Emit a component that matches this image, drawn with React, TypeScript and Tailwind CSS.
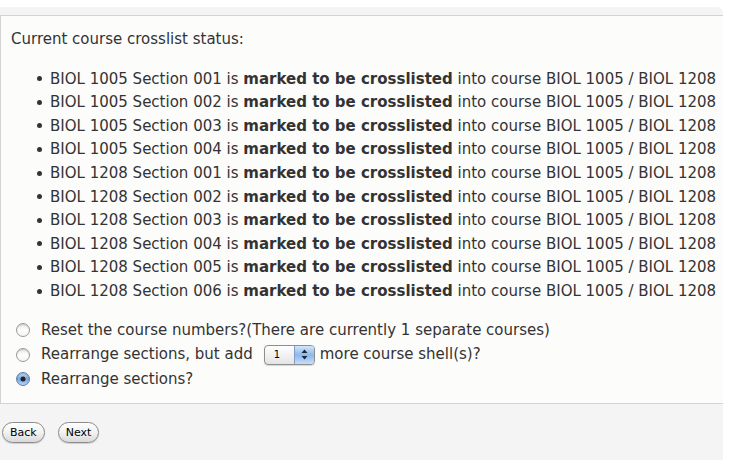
import React from "react";

const SECTIONS = [
  ["1005", "001"],
  ["1005", "002"],
  ["1005", "003"],
  ["1005", "004"],
  ["1208", "001"],
  ["1208", "002"],
  ["1208", "003"],
  ["1208", "004"],
  ["1208", "005"],
  ["1208", "006"],
];

function Radio({ checked = false }: { checked?: boolean }) {
  return checked ? (
    <span className="relative inline-block h-[14px] w-[14px] shrink-0 rounded-full border border-[#5a7fae] bg-gradient-to-b from-[#c9dcf3] via-[#7aa6dc] to-[#b6d3f5] shadow-[inset_0_1px_1px_rgba(0,0,0,0.2)]">
      <span className="absolute left-1/2 top-1/2 h-[5px] w-[5px] -translate-x-1/2 -translate-y-1/2 rounded-full bg-[#1b2433]" />
    </span>
  ) : (
    <span className="inline-block h-[14px] w-[14px] shrink-0 rounded-full border border-[#9a9a9a] bg-gradient-to-b from-[#e6e6e6] via-[#ffffff] to-[#f4f4f4] shadow-[inset_0_1px_1px_rgba(0,0,0,0.15)]" />
  );
}

function Pill({ children }: { children: React.ReactNode }) {
  return (
    <button className="h-[21px] rounded-full border border-[#8b8b8b] bg-gradient-to-b from-[#ffffff] via-[#f2f2f2] to-[#d9d9d9] px-[7px] text-[11px] leading-none text-black shadow-[0_1px_1px_rgba(0,0,0,0.15)]">
      {children}
    </button>
  );
}

export default function App() {
  return (
    <div className="h-[460px] w-[731px] overflow-hidden bg-white font-['DejaVu_Sans',Verdana,sans-serif] text-[15px] text-[#333]">
      <div className="mt-[7px] flex h-[453px] w-[723px] flex-col rounded-tr-[6px] bg-[#f3f4f3]">
        <div className="h-[8px]" />
        <div className="border-y border-l border-[#d2d3d2] bg-[#fcfcfb] pb-[12px] pl-[10px] pt-[14px]">
          <div className="leading-[19px]">Current course crosslist status:</div>

          <ul className="mt-[18px] pl-[26px]">
            {SECTIONS.map(([course, sec]) => (
              <li key={course + sec} className="flex h-[23.6px] items-center whitespace-nowrap">
                <span className="mr-[8px] inline-block h-[5px] w-[5px] rounded-full bg-[#333]" />
                <span>
                  BIOL {course} Section {sec} is <b className="font-bold">marked to be crosslisted</b> into course BIOL 1005 / BIOL 1208
                </span>
              </li>
            ))}
          </ul>

          <div className="mt-[15px] flex flex-col">
            <label className="flex h-[24.5px] items-center gap-[11px] pl-[5px]">
              <Radio />
              <span>Reset the course numbers?(There are currently 1 separate courses)</span>
            </label>
            <label className="flex h-[24.5px] items-center gap-[11px] pl-[5px]">
              <Radio />
              <span className="flex items-center">
                Rearrange sections, but add
                <span className="ml-[11px] mr-[5px] inline-flex h-[20px] w-[51px] items-center overflow-hidden rounded-[4px] border border-[#8e8e8e] bg-gradient-to-b from-[#ffffff] to-[#e4e4e4] shadow-[0_1px_1px_rgba(0,0,0,0.15)]">
                  <span className="flex-1 pl-[9px] text-[10px] leading-none text-black">1</span>
                  <span className="flex h-full w-[20px] flex-col items-center justify-center border-l border-[#7d9cc8] bg-gradient-to-b from-[#d4e6fb] via-[#8db7ec] to-[#c8def8]">
                    <svg width="7" height="11" viewBox="0 0 7 11">
                      <path d="M3.5 0.5 L6.5 4 H0.5 Z" fill="#1c2738" />
                      <path d="M3.5 10.5 L6.5 7 H0.5 Z" fill="#1c2738" />
                    </svg>
                  </span>
                </span>
                more course shell(s)?
              </span>
            </label>
            <label className="flex h-[24.5px] items-center gap-[11px] pl-[5px]">
              <Radio checked />
              <span>Rearrange sections?</span>
            </label>
          </div>
        </div>

        <div className="mt-[18px] flex gap-[13px] pl-[2px]">
          <Pill>Back</Pill>
          <Pill>Next</Pill>
        </div>
      </div>
    </div>
  );
}
